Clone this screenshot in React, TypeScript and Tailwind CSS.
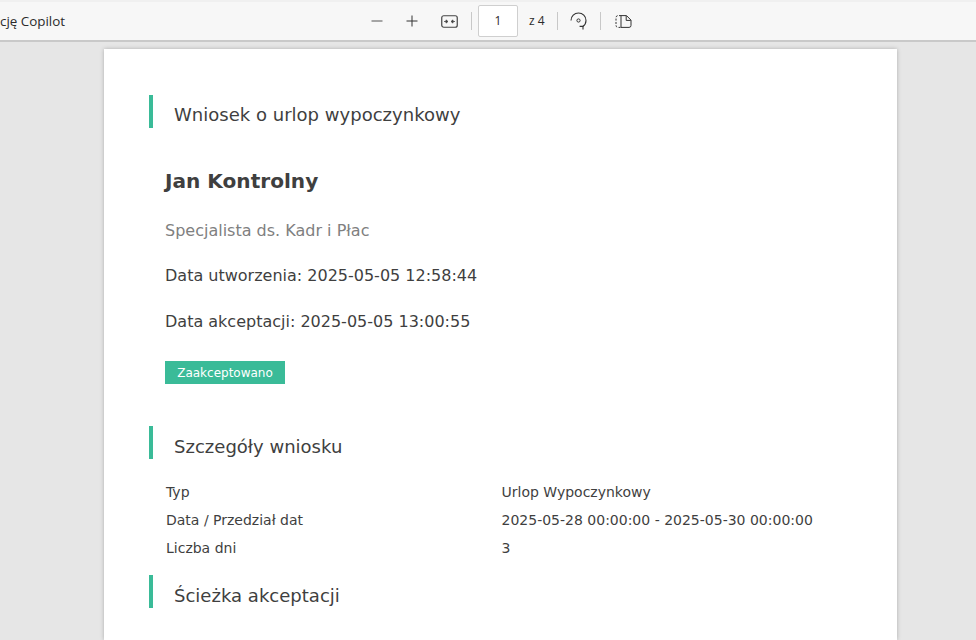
const docFont = "font-['DejaVu_Sans',sans-serif]"

function SectionTitle({ title, first }: { title: string; first?: boolean }) {
  return (
    <div className="flex h-[33px] items-start border-l-4 border-[#3abb98] pl-[21px]">
      <h2 className={`${first ? "pt-[3px]" : "pt-[4px]"} text-[18.05px] leading-[33px] text-[#3f3f3f]`}>{title}</h2>
    </div>
  )
}

function Divider() {
  return <div className="mx-[13px] h-[18px] w-px bg-[#c8c8c8]" />
}

function Toolbar() {
  return (
    <div className="relative flex h-[42px] shrink-0 items-center border-t-2 border-b-2 border-t-[#f0f0f0] border-b-[#c9c9c9] bg-[#f7f7f7] font-['Open_Sans',sans-serif] text-[#2b2b2b]">
      <span className="absolute left-0 text-[13.4px] leading-[38px]">cję Copilot</span>
      <div className="ml-[371px] flex items-center">
        <svg width="12" height="12" viewBox="0 0 12 12" className="mr-[23px]">
          <path d="M0.5 6h11" stroke="#6e6e6e" strokeWidth="1.2" />
        </svg>
        <svg width="12" height="12" viewBox="0 0 12 12" className="mr-[23px]">
          <path d="M0.5 6h11M6 0.5v11" stroke="#333" strokeWidth="1" />
        </svg>
        <svg width="17" height="13" viewBox="0 0 17 13">
          <rect x="0.75" y="0.75" width="15.5" height="11.5" rx="2" fill="none" stroke="#444" strokeWidth="1.2" />
          <path d="M3 6.5h2.5M11.5 6.5H14M7 6.5l-2-1.6v3.2zM10 6.5l2-1.6v3.2z" stroke="#444" strokeWidth="0.8" fill="#444" />
        </svg>
        <div className="-mr-px">
          <Divider />
        </div>
        <div className="-ml-[6px] flex h-[32px] w-[40px] items-center justify-center rounded-[2px] border border-[#cfcfcf] bg-white text-[12px]">
          1
        </div>
        <span className="ml-[11px] text-[12px]">z 4</span>
        <div className="-ml-px">
          <Divider />
        </div>
        <svg width="17" height="18" viewBox="0 0 17 18" className="-ml-px">
          <path d="M1 8.5a7.5 7.5 0 0 1 15 0c0 2.4-1.2 4.6-3.2 6" fill="none" stroke="#333" strokeWidth="1.1" />
          <path d="M9.6 14.4h3.4v3.2" fill="none" stroke="#333" strokeWidth="1.1" />
          <circle cx="8.5" cy="8.5" r="1.6" fill="none" stroke="#333" strokeWidth="1" />
        </svg>
        <Divider />
        <svg width="17" height="13" viewBox="0 0 17 13" className="ml-px">
          <path d="M6 .6H3a2 2 0 0 0-2 2v7.8a2 2 0 0 0 2 2h3" fill="none" stroke="#333" strokeWidth="1" strokeDasharray="2 1.4" />
          <path d="M6 .6h5.5l4.5 4.5v5.3a2 2 0 0 1-2 2H6zM11.2.8v4.6h4.6" fill="none" stroke="#333" strokeWidth="1" />
        </svg>
      </div>
    </div>
  )
}

export default function App() {
  const rows = [
    ["Typ", "Urlop Wypoczynkowy"],
    ["Data / Przedział dat", "2025-05-28 00:00:00 - 2025-05-30 00:00:00"],
    ["Liczba dni", "3"],
  ]

  return (
    <div className="flex h-[640px] w-[976px] flex-col overflow-hidden bg-[#e6e6e6]">
      <Toolbar />
      <div className={`${docFont} mt-[7px] ml-[104px] w-[793px] grow bg-white pt-[46px] pl-[45px] text-[#3f3f3f] shadow-[0_0_4px_rgba(0,0,0,0.25)]`}>
        <SectionTitle first title="Wniosek o urlop wypoczynkowy" />

        <div className="pl-4">
          <h1 className="mt-[38px] text-[20.1px] leading-[30px] font-bold">Jan Kontrolny</h1>
          <p className="mt-[23px] text-[16px] leading-[24px] text-[#808080]">Specjalista ds. Kadr i Płac</p>
          <p className="mt-[21px] text-[16px] leading-[24px]">Data utworzenia: 2025-05-05 12:58:44</p>
          <p className="mt-[22px] text-[16px] leading-[24px]">Data akceptacji: 2025-05-05 13:00:55</p>
          <div className="mt-[27px] flex h-[23px] w-[120px] items-center justify-center bg-[#3abb98] text-[12px] text-white">
            Zaakceptowano
          </div>
        </div>

        <div className="mt-[42px]">
          <SectionTitle title="Szczegóły wniosku" />
        </div>

        <div className="mt-[19px] mb-[13px] pl-[17px] text-[14px]">
          {rows.map(([label, value]) => (
            <div key={label} className="flex h-[28px] items-center">
              <div className="w-[335.5px]">{label}</div>
              <div>{value}</div>
            </div>
          ))}
        </div>

        <SectionTitle title="Ścieżka akceptacji" />
      </div>
    </div>
  )
}
